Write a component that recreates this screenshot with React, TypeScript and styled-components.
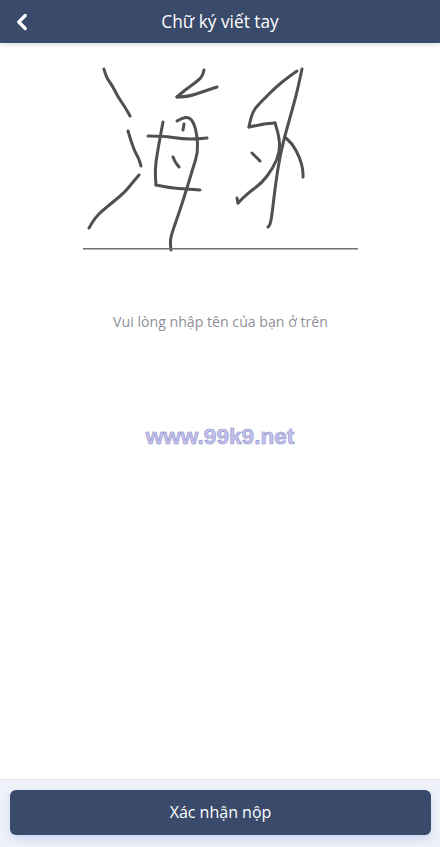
import styled, { createGlobalStyle } from "styled-components";
import { ChevronLeft } from "lucide-react";

const GlobalStyle = createGlobalStyle`
  html, body {
    margin: 0;
    padding: 0;
    background: #fff;
    font-family: "Open Sans", "Noto Sans", sans-serif;
  }
  * { box-sizing: border-box; }
`;

const Page = styled.div`
  width: 440px;
  height: 847px;
  display: flex;
  flex-direction: column;
  overflow: hidden;
`;
const Header = styled.header`
  flex: none;
  height: 43px;
  background-color: #3a4a6b;
  box-shadow: 0 1px 6px rgba(0, 0, 0, 0.16);
  display: grid;
  grid-template-columns: 44px 1fr 44px;
  align-items: center;
  color: #fff;
  position: relative;
`;
const BackButton = styled.button`
  border: 0;
  background: none;
  color: #fff;
  padding: 0 0 0 9px;
  display: flex;
  align-items: center;
`;
const Title = styled.h1`
  margin: 0;
  font-size: 17.3px;
  font-weight: 400;
  text-align: center;
`;
const Main = styled.main`
  flex: 1;
  display: flex;
  flex-direction: column;
  align-items: center;
`;
const Pad = styled.svg`
  display: block;
  flex: none;
  path {
    fill: none;
    stroke: #505050;
    stroke-width: 3;
    stroke-linecap: round;
    stroke-linejoin: round;
    filter: blur(0.3px);
  }
`;
const Hint = styled.p`
  margin: 59px 0 0;
  padding-left: 1px;
  font-size: 14.15px;
  line-height: 20px;
  color: #8f8f99;
`;
const Watermark = styled.div`
  margin-top: 92px;
  font-family: "Liberation Sans", Arial, sans-serif;
  font-size: 22.6px;
  font-weight: 700;
  line-height: 26px;
  color: #c3c3ec;
  -webkit-text-stroke: 0.6px #8f8fcc;
`;
const Footer = styled.footer`
  flex: none;
  height: 68px;
  padding: 10px 9px 12px 10px;
  background-color: #f0f2f9;
  border-top: 1px solid #e2e3e8;
`;
const Submit = styled.button`
  width: 100%;
  height: 45px;
  padding: 0 0 2px;
  border: 0;
  border-radius: 6px;
  background-color: #3a4a6b;
  box-shadow: 0 4px 10px rgba(120, 165, 230, 0.35);
  color: #fff;
  font-family: inherit;
  font-size: 16px;
`;

const strokes = [
  [[104, 69], [106, 77], [112, 85], [118, 97], [125, 107], [130, 116]],
  [[128, 131], [131, 141], [135, 152], [139, 159], [141, 166]],
  [[139, 175], [133, 182], [125, 192], [113, 202], [102, 211], [95, 218], [89, 228]],
  [[204, 70], [203, 76], [195, 83], [185, 90], [177, 97]],
  [[177, 97], [187, 97], [202, 92], [217, 87]],
  [[163, 122], [160, 138], [157, 155], [155, 170], [156, 185]],
  [[156, 185], [170, 188], [187, 189], [200, 190]],
  [[148, 136], [163, 136], [183, 139], [197, 139], [207, 138]],
  [[177, 121], [182, 118], [189, 117], [194, 123], [197, 135], [198, 152], [193, 168], [187, 188], [180, 210], [173, 230], [170, 240], [171, 250]],
  [[184, 124], [183, 130]],
  [[173, 157], [175, 162], [179, 167]],
  [[297, 71], [287, 78], [275, 88], [265, 98], [255, 108], [251, 117], [249, 127]],
  [[249, 127], [263, 124], [275, 123]],
  [[275, 123], [279, 135], [280, 152], [273, 168], [262, 183], [248, 193], [238, 203]],
  [[238, 203], [237, 198]],
  [[302, 69], [298, 88], [293, 107], [287, 128], [280, 155], [275, 188], [272, 215], [270, 225], [268, 227]],
  [[286, 138], [292, 143], [300, 158], [303, 170], [303, 177]],
  [[252, 153], [260, 161]],
];

// curve through the midpoints so the pen strokes don't look like polylines
const toPath = (pts: number[][]) => {
  let d = `M${pts[0][0]} ${pts[0][1]}`;
  for (let i = 1; i < pts.length - 1; i++) {
    const mx = (pts[i][0] + pts[i + 1][0]) / 2;
    const my = (pts[i][1] + pts[i + 1][1]) / 2;
    d += ` Q${pts[i][0]} ${pts[i][1]} ${mx} ${my}`;
  }
  const last = pts[pts.length - 1];
  return `${d} L${last[0]} ${last[1]}`;
};

export default function App() {
  return (
    <Page>
      <GlobalStyle />
      <Header>
        <BackButton type="button" aria-label="back">
          <ChevronLeft size={26} strokeWidth={3} />
        </BackButton>
        <Title>Chữ ký viết tay</Title>
      </Header>
      <Main>
        <Pad width="440" height="210" viewBox="0 43 440 210">
          {strokes.map(pts => (
            <path key={pts.join()} d={toPath(pts)} />
          ))}
          <line x1="83" y1="248.8" x2="358" y2="248.8" stroke="#707070" strokeWidth="1.5" />
        </Pad>
        <Hint>Vui lòng nhập tên của bạn ở trên</Hint>
        <Watermark>www.99k9.net</Watermark>
      </Main>
      <Footer>
        <Submit type="button">Xác nhận nộp</Submit>
      </Footer>
    </Page>
  );
}
